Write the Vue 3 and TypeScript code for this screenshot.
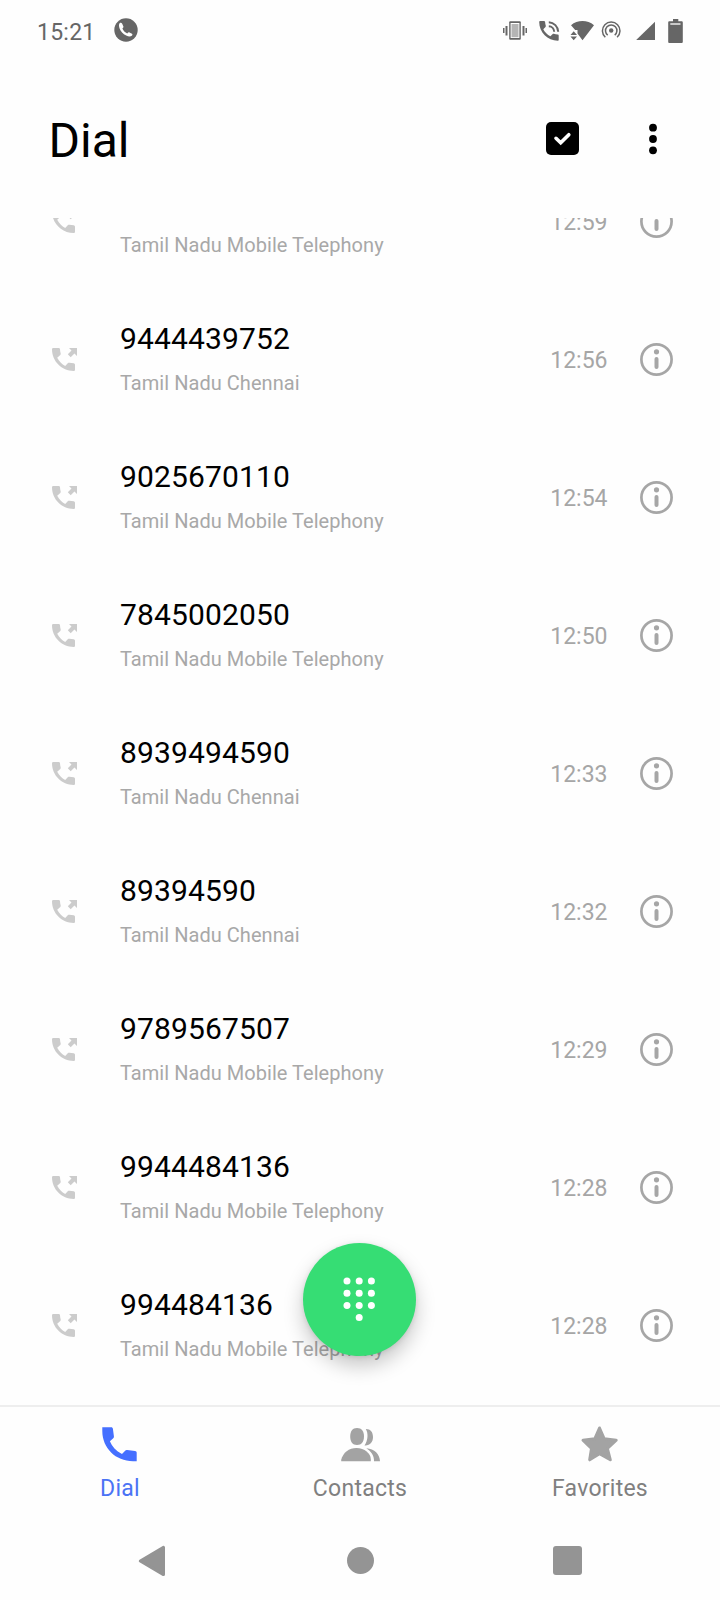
<script setup lang="ts">
interface Call {
  number: string
  place: string
  time: string
}

const mobile = 'Tamil Nadu Mobile Telephony'
const chennai = 'Tamil Nadu Chennai'

const calls: Call[] = [
  { number: '', place: mobile, time: '12:59' },
  { number: '9444439752', place: chennai, time: '12:56' },
  { number: '9025670110', place: mobile, time: '12:54' },
  { number: '7845002050', place: mobile, time: '12:50' },
  { number: '8939494590', place: chennai, time: '12:33' },
  { number: '89394590', place: chennai, time: '12:32' },
  { number: '9789567507', place: mobile, time: '12:29' },
  { number: '9944484136', place: mobile, time: '12:28' },
  { number: '994484136', place: mobile, time: '12:28' },
]

const keys: [number, number][] = [
  [4, 4], [16.2, 4], [28.4, 4],
  [4, 16.2], [16.2, 16.2], [28.4, 16.2],
  [4, 28.4], [16.2, 28.4], [28.4, 28.4],
  [16.2, 40.6],
]
</script>

<template>
  <div class="screen">
    <div class="status">
      <span class="clock">15:21</span>
      <svg class="wa" width="24" height="24" viewBox="0 0 24 24">
        <circle cx="12" cy="12" r="11.7" fill="#666" />
        <path fill="#fff" d="M5.6 5.2C6.6 4.500 7.700 4.800 8.200 5.700L9.400 8.400C9.600 9 9.500 9.300 8.400 10.500C9.300 12.700 11 14.500 13.300 15.500C14.500 14.300 14.900 14.200 15.500 14.500L18 15.700C18.700 16.100 18.500 17 17.800 17.700C16.500 18.800 14.600 18.700 12.200 17.500C9 15.900 6.600 13.200 5.500 10.200C4.900 8.300 4.700 6.200 5.600 5.200Z" />
      </svg>
      <svg class="indicators" width="182" height="26" viewBox="502 18 182 26" fill="#666">
        <path d="M503 28h1.5v5H503zM505.5 26h2v9.500h-2zM525.500 28h1.500v5h-1.500zM522.500 26h2v9.500h-2z" />
        <rect x="509.200" y="21.200" width="11.600" height="18.600" rx="1" />
        <rect x="510.600" y="23" width="8.800" height="15" fill="#fff" />
        <rect x="511.500" y="24" width="7" height="13.200" fill="#b5b5b5" />
        <path d="M540.300 21H544c.600 0 1 .400 1.100 1 .1 1.300.300 2.600.7 3.800.1.400 0 .8-.3 1.100l-2.200 2.300c1.600 3.100 4 5.500 7.100 7.100l2.300-2.300c.3-.3.700-.4 1.100-.3 1.200.4 2.500.6 3.900.7.600 0 1 .5 1 1.100V39.700c0 .6-.4 1.100-1 1.100-10 0-18.500-8.300-18.500-18.700 0-.6.4-1.100 1.100-1.100Z" />
        <path d="M548.800 22.200a9.800 9.800 0 0 1 9.400 9.500M548.800 26.200a5.700 5.700 0 0 1 5.400 5.500" fill="none" stroke="#666" stroke-width="2" />
        <path d="M571 25.300C577.500 19.700 587.500 19.700 594 25.300L582.500 40.300L577.500 33.500V30H575.200Z" />
        <path d="M573.700 31.200L577 35H570.500ZM570.500 36.400H577L573.700 40.300Z" />
        <circle cx="611.200" cy="30.500" r="2.200" />
        <path d="M607.700 35.100a5.700 5.700 0 1 1 7 0M605.300 37.300a8.800 8.800 0 1 1 11.800 0" fill="none" stroke="#666" stroke-width="1.500" />
        <path d="M655 21.800V40H636.200Z" />
        <path d="M673 19h5.300v2.300h3.200c.8 0 1.300.5 1.300 1.300V41.700c0 .8-.5 1.300-1.300 1.300H669.500c-.8 0-1.300-.5-1.300-1.300V22.600c0-.8.5-1.300 1.300-1.300H673Z" />
        <path d="M670.300 24h10.200" stroke="#fff" stroke-width="1.300" />
      </svg>
    </div>

    <header class="header">
      <h1>Dial</h1>
      <svg class="check" width="33" height="33" viewBox="0 0 33 33">
        <rect width="33" height="33" rx="5" />
        <path d="M10 16.300L14.700 20.800L22.800 12.700" fill="none" stroke="#fff" stroke-width="3.600" stroke-linecap="round" stroke-linejoin="miter" />
      </svg>
      <svg class="more" width="10" height="32" viewBox="0 0 10 32">
        <circle cx="5" cy="4.700" r="3.900" /><circle cx="5" cy="16" r="3.900" /><circle cx="5" cy="27.300" r="3.900" />
      </svg>
    </header>

    <main class="list">
      <div v-for="(call, i) in calls" :key="i" class="row">
        <svg class="outgoing" width="26" height="24" viewBox="0 0 26 24" fill="#ccc">
          <path d="M1.300 0H6.500C7.300 0 7.900.500 8 1.300C8.100 2.800 8.300 4.200 8.700 5.500C8.800 6 8.700 6.500 8.300 6.900L5.200 9.800C7.100 13.500 9.900 16.200 13.200 17.900L16 15.100C16.400 14.700 16.900 14.600 17.400 14.700L21.700 15.300C22.400 15.400 23 16 23 16.800V21.700C23 22.400 22.400 23 21.700 23C9.700 23 0 13.300 0 1.300C0 .600.500 0 1.300 0Z" />
          <path d="M17 0H25V8L22.400 5.500L18.700 9.200L15.800 6.300L19.500 2.600Z" />
        </svg>
        <div class="who">
          <div class="number">{{ call.number }}</div>
          <div class="place">{{ call.place }}</div>
        </div>
        <span class="time">{{ call.time }}</span>
        <svg class="info" width="33" height="33" viewBox="0.500 0.500 33 33">
          <circle cx="17" cy="17" r="15.100" fill="none" stroke="#a6a6a6" stroke-width="2.700" />
          <circle cx="17" cy="9.300" r="2.600" fill="#a6a6a6" />
          <path d="M17 16.600V24.500" stroke="#a6a6a6" stroke-width="4" stroke-linecap="round" />
        </svg>
      </div>
    </main>

    <button class="fab" aria-label="Keypad">
      <svg width="32.400" height="44.600" viewBox="0 0 32.400 44.600" fill="#fff">
        <circle v-for="([x, y], i) in keys" :key="i" :cx="x" :cy="y" r="3.500" />
      </svg>
    </button>

    <nav class="tabs">
      <div class="tab active">
        <svg width="40" height="38" viewBox="0 0 40 38" fill="#456fff">
          <path d="M2.300 2.200H11.200C12.200 2.200 12.800 2.800 12.900 3.700L13.900 11.200C14 12.300 13.800 12.800 13 13.500L9.900 16.300C12 21.500 16 26 22 28.900L24.900 25.900C25.600 25.200 26.200 24.900 27.200 25L35 26C36 26.100 36.700 26.800 36.700 27.800V36.200H33C15.700 36.200 2.300 23 2.300 6Z" />
        </svg>
        <span>Dial</span>
      </div>
      <div class="tab">
        <svg width="40" height="38" viewBox="0 0 40 38" fill="#a3a3a3">
          <path d="M17 3C21.700 3 24 6.200 24 11.500C24 16.700 21.500 20 17 20C12.500 20 10.200 16.700 10.200 11.500C10.200 6.200 12.500 3 17 3Z" />
          <path d="M1.200 36.300V34.800C3 27.500 9 23 16.500 23C24.500 23 30.800 28.500 30.800 34.200V36.300Z" />
          <path d="M25.800 4C30.500 3.900 33 7 33 12C33 17.300 29.800 20.900 24.500 20.400C28.200 15.500 28.400 8 25.800 4Z" />
          <path d="M26.300 23.300C34.500 23.700 39.900 29.500 40 36.300H34C34.300 30.500 31 26.500 26.300 23.300Z" />
        </svg>
        <span>Contacts</span>
      </div>
      <div class="tab">
        <svg width="40" height="38" viewBox="0 0 40 38" fill="#a3a3a3" stroke="#a3a3a3" stroke-width="3" stroke-linejoin="round">
          <path d="M19.500 3L24.100 13.700L36.200 15.200L27.400 23.500L30.300 34.800L19.500 28.800L9.700 34.800L11.500 23.500L3 15.200L14.900 13.700Z" />
        </svg>
        <span>Favorites</span>
      </div>
    </nav>

    <div class="system">
      <svg width="28" height="32" viewBox="0 0 28 32" fill="#949494" stroke="#949494" stroke-width="3" stroke-linejoin="round">
        <path d="M2.300 16L25.500 2.400V29.600Z" />
      </svg>
      <span class="home"></span>
      <span class="recent"></span>
    </div>
  </div>
</template>

<style>
body {
  margin: 0;
  background: #fefefe;
}
</style>

<style scoped>
.screen {
  position: relative;
  width: 720px;
  height: 1600px;
  overflow: hidden;
  display: flex;
  flex-direction: column;
  background: #fefefe;
  font-family: Roboto, "Liberation Sans", sans-serif;
  color: #000;
}
svg {
  display: block;
  flex: none;
}
.status {
  height: 62px;
  flex: none;
  display: flex;
  align-items: flex-start;
  box-sizing: border-box;
  padding: 18px 36px 0 37px;
}
.clock {
  width: 76.500px;
  line-height: 30px;
  font-size: 23px;
  letter-spacing: 0.250px;
  color: #666;
}
.wa {
  margin-right: auto;
}
.header {
  height: 156px;
  flex: none;
  display: flex;
  align-items: flex-start;
  box-sizing: border-box;
  padding: 60px 62px 0 48.500px;
}
h1 {
  margin: -9px auto 0 0;
  font-size: 48px;
  line-height: 56px;
  font-weight: 400;
}
.check {
  margin-right: 69px;
}
.more {
  margin: 1.300px 0 0;
}
.list {
  height: 1187px;
  flex: none;
  overflow: hidden;
}
.row {
  height: 138px;
  display: flex;
  align-items: center;
  box-sizing: border-box;
  padding: 0 47px 0 52px;
}
.row:first-child {
  margin-top: -65.500px;
}
.who {
  flex: 1;
  margin-left: 42px;
  padding-bottom: 5px;
}
.number {
  height: 42px;
  line-height: 42px;
  font-size: 30px;
  letter-spacing: 0.150px;
}
.place {
  line-height: 26px;
  margin-top: 10px;
  font-size: 20px;
  letter-spacing: 0.040px;
  color: #a8a8a8;
}
.time {
  padding-top: 2px;
  font-size: 23px;
  line-height: 30px;
  color: #a6a6a6;
  margin-right: 32.500px;
}
.fab {
  position: absolute;
  left: 303px;
  top: 1243px;
  width: 113px;
  height: 113px;
  padding: 0;
  border: 0;
  border-radius: 50%;
  background: #36dd74;
  display: flex;
  align-items: center;
  justify-content: center;
  box-shadow: 0 10px 20px rgba(0, 0, 0, 0.220), 0 1px 5px rgba(0, 0, 0, 0.100);
}
.tabs {
  height: 115px;
  flex: none;
  display: flex;
  box-sizing: border-box;
  border-top: 2px solid #eee;
  padding-top: 18px;
}
.tab {
  flex: 1;
  display: flex;
  flex-direction: column;
  align-items: center;
  color: #808080;
}
.tab span {
  margin-top: 11px;
  font-size: 23px;
  line-height: 30px;
  letter-spacing: 0.250px;
}
.tab.active {
  color: #4b73f5;
}
.system {
  flex: 1;
  display: flex;
  align-items: center;
  padding: 1px 138px 0;
  justify-content: space-between;
}
.home {
  width: 27px;
  height: 27px;
  margin-left: 1px;
  border-radius: 50%;
  background: #949494;
}
.recent {
  width: 29px;
  height: 29px;
  border-radius: 3px;
  background: #949494;
}
</style>
